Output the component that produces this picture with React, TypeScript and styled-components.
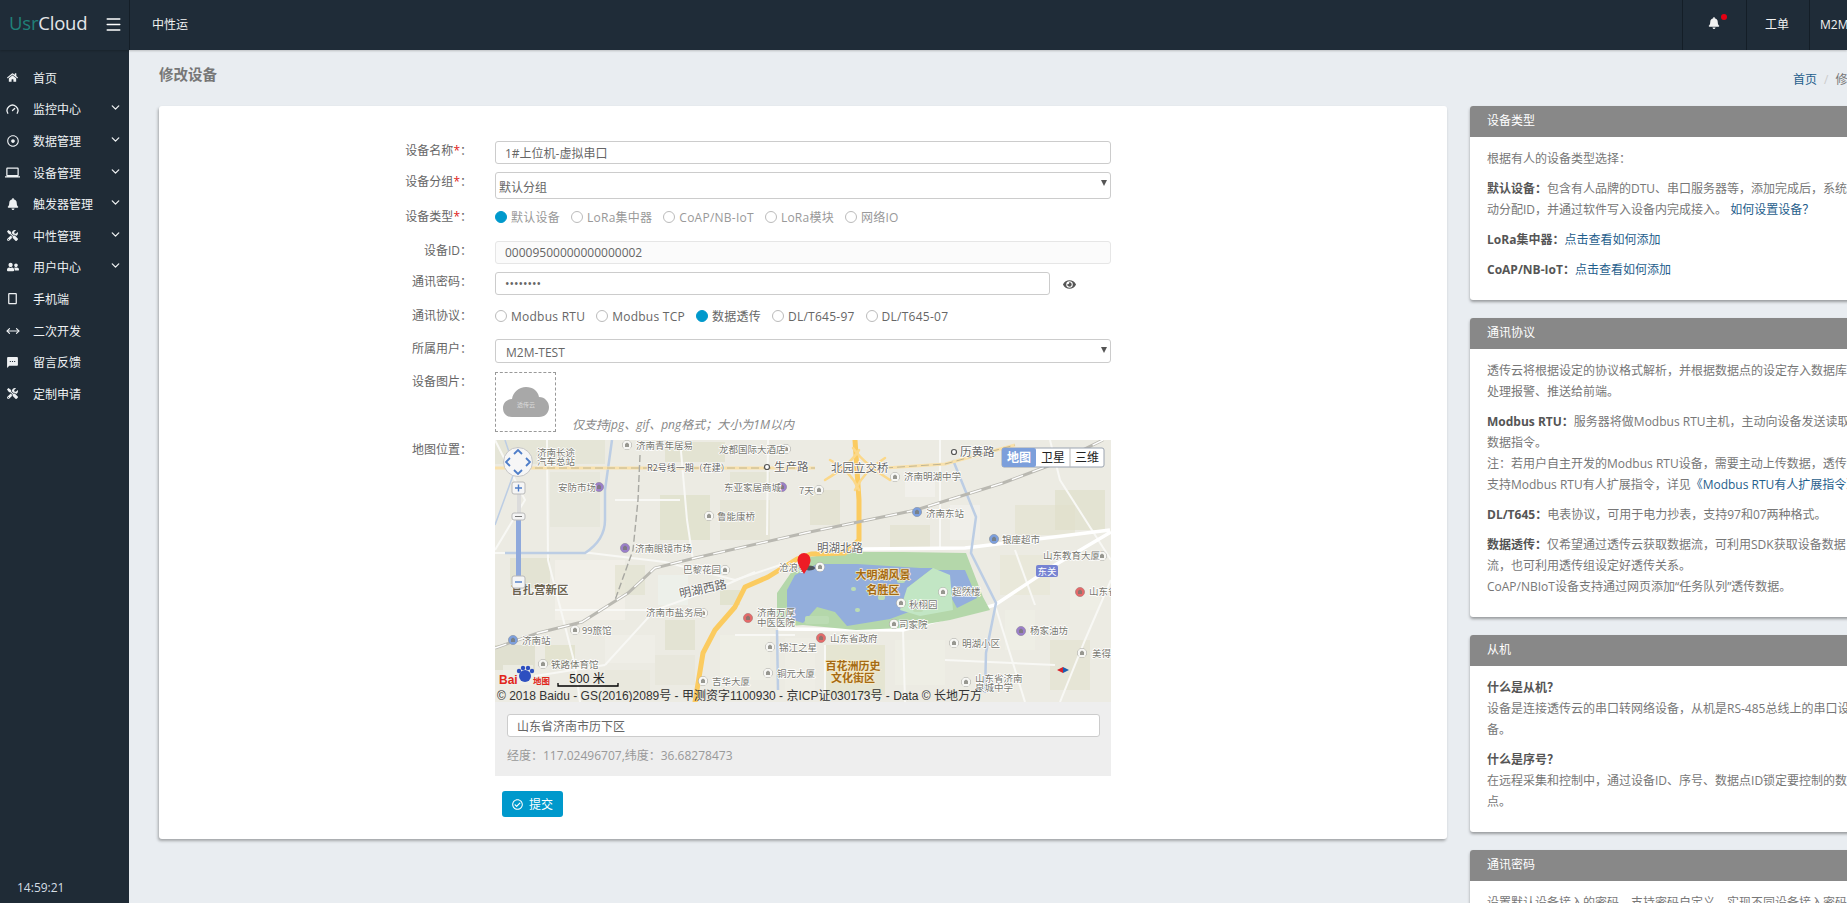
import React from 'react';
import styled, { createGlobalStyle } from 'styled-components';
import { ChevronDown, Gauge, Menu, MoveHorizontal } from 'lucide-react';
import {
  FaBell,
  FaEye,
  FaHome,
  FaRegCheckCircle,
  FaRegDotCircle,
  FaTools,
  FaUserFriends,
} from 'react-icons/fa';
import { MdLaptop, MdOutlineCropPortrait, MdSms } from 'react-icons/md';

const GlobalStyle = createGlobalStyle`
  html, body {
    margin: 0;
    height: 100%;
    overflow: hidden;
    background: #e9edf1;
  }
  body {
    font-family: "Open Sans", "Noto Sans CJK SC", sans-serif;
    font-size: 12px;
    color: #666;
  }
  * { box-sizing: border-box; }
`;

const navItems = [
  { icon: <FaHome size={11} />, text: '首页' },
  { icon: <Gauge size={13} strokeWidth={2.4} />, text: '监控中心', more: true },
  { icon: <FaRegDotCircle />, text: '数据管理', more: true },
  { icon: <MdLaptop size={15} />, text: '设备管理', more: true },
  { icon: <FaBell />, text: '触发器管理', more: true },
  { icon: <FaTools size={11} />, text: '中性管理', more: true },
  { icon: <FaUserFriends />, text: '用户中心', more: true },
  { icon: <MdOutlineCropPortrait size={15} />, text: '手机端' },
  { icon: <MoveHorizontal size={14} strokeWidth={2} />, text: '二次开发' },
  { icon: <MdSms size={13} />, text: '留言反馈' },
  { icon: <FaTools size={11} />, text: '定制申请' },
];

const typeOptions = ['默认设备', 'LoRa集中器', 'CoAP/NB-IoT', 'LoRa模块', '网络IO'];
const protocolOptions = ['Modbus RTU', 'Modbus TCP', '数据透传', 'DL/T645-97', 'DL/T645-07'];

// map blocks: x, y, w, h, colour
const blocks: [number, number, number, number, string][] = [
  [0, 0, 110, 24, '#e3e2d2'], [55, 32, 50, 55, '#e6e5d8'], [170, 2, 60, 20, '#dfdfca'], [165, 55, 50, 45, '#dedfc8'],
  [235, 32, 40, 20, '#e2e2d0'], [225, 60, 50, 40, '#e4e3d2'], [15, 118, 40, 30, '#e0e0cc'], [60, 120, 70, 60, '#f3f1ea'],
  [120, 125, 30, 30, '#e3e2d0'], [163, 135, 30, 30, '#eef2ec'], [225, 150, 20, 15, '#dedfc8'], [170, 180, 30, 30, '#e0dfcc'],
  [110, 195, 50, 28, '#f1efe8'], [50, 205, 30, 20, '#e0dfc8'], [160, 215, 40, 30, '#e7e6d8'], [0, 205, 40, 25, '#dcdcc8'],
  [225, 195, 50, 45, '#f0efe6'], [290, 198, 30, 60, '#efeee6'], [330, 205, 60, 50, '#e3e2ca'], [400, 200, 50, 45, '#f0efe6'],
  [505, 115, 50, 40, '#e8e7d6'], [520, 65, 60, 30, '#e4e3d0'], [395, 85, 40, 22, '#e2e1ce'], [455, 65, 30, 35, '#f2f1ec'],
  [560, 50, 50, 40, '#dfdfca'], [510, 170, 30, 40, '#f0efe6'], [555, 200, 40, 50, '#e4e3d0'], [575, 140, 30, 30, '#f0efe6'],
  [410, 35, 30, 22, '#f3f2ee'], [315, 50, 30, 35, '#e1e0cc'], [110, 230, 45, 25, '#e8e7da'], [8, 225, 30, 20, '#f0efe8'],
];

// white roads
const roads = [
  'M0 113 L95 113 L170 122 L240 140 L300 120',
  'M110 225 L160 170 L235 143 L260 132',
  'M52 0 L53 120 L80 225 L85 262',
  'M185 0 L192 80 L198 120',
  'M273 0 L272 95',
  'M408 190 L410 262',
  'M445 0 L445 108',
  'M555 0 L565 40 L616 120',
  'M616 140 L590 200 L565 262',
  'M0 0 L30 60 L0 110',
  'M110 225 L40 236',
  'M500 165 L530 262',
  'M60 170 L160 170',
  'M240 195 L300 195',
  'M330 205 L330 262',
  'M450 220 L560 225',
  'M520 110 L540 165',
  'M120 60 L185 60',
];

// points of interest: label x, y, text, icon x, y, icon colour
const pois: [number, number, string, number, number, string][] = [
  [141, 5, '济南青年居易', 132, 5, '#f7f7f4'], [224, 9, '龙都国际大酒店', 291, 9, '#f7f7f4'],
  [63, 47, '安防市场', 104, 47, '#9a7fc8'], [229, 47, '东亚家居商城', 287, 47, '#9a7fc8'],
  [222, 76, '鲁能康桥', 214, 76, '#f7f7f4'], [140, 108, '济南眼镜市场', 130, 108, '#9a7fc8'],
  [188, 129, '巴黎花园', 230, 130, '#f7f7f4'], [151, 172, '济南市盐务局', 208, 173, '#f7f7f4'],
  [284, 207, '锦江之星', 275, 207, '#f7f7f4'], [282, 233, '铜元大厦', 273, 233, '#f7f7f4'],
  [217, 241, '吉华大厦', 208, 241, '#f7f7f4'], [56, 224, '铁路体育馆', 48, 224, '#f7f7f4'],
  [87, 190, '99旅馆', 80, 190, '#f7f7f4'], [27, 200, '济南站', 18, 200, '#7d9fdc'],
  [409, 36, '济南明湖中学', 400, 37, '#f7f7f4'], [431, 73, '济南东站', 422, 72, '#7d9fdc'],
  [507, 99, '银座超市', 499, 99, '#7d9fdc'], [548, 115, '山东教育大厦', 607, 116, '#f7f7f4'],
  [594, 151, '山东省', 585, 152, '#e36a6a'], [457, 151, '超然楼', 448, 152, '#f7f7f4'],
  [414, 164, '秋栩园', 406, 163, '#f7f7f4'], [404, 184, '司家院', 399, 184, '#f7f7f4'],
  [335, 198, '山东省政府', 326, 198, '#e36a6a'], [535, 190, '杨家油坊', 526, 191, '#9a7fc8'],
  [467, 203, '明湖小区', 459, 203, '#f7f7f4'], [597, 213, '美得乐', 587, 213, '#f7f7f4'],
  [480, 238, '山东省济南', 471, 242, '#f7f7f4'], [304, 50, '7天', 324, 50, '#f7f7f4'],
  [262, 172, '济南万厚', 253, 178, '#e36a6a'], [284, 127, '沧浪亭', 325, 127, '#f7f7f4'],
];

const plainLabels: [number, number, string][] = [
  [42, 12, '济南长途'], [42, 21, '汽车总站'], [262, 182, '中医医院'], [480, 247, '泉城中学'],
];

const bigLabels: [number, number, string][] = [
  [279, 27, '生产路'], [465, 12, '历黄路'], [336, 28, '北园立交桥'], [322, 108, '明湖北路'],
];

const brownLabels: [number, number, string][] = [
  [388, 134, '大明湖风景'], [388, 149, '名胜区'], [358, 225, '百花洲历史'], [358, 237, '文化街区'],
];

const lakePatches: [number, number, number, number][] = [
  [356, 147, 5, 4], [383, 155, 7, 5], [402, 137, 8, 6], [360, 168, 5, 4], [310, 176, 24, 8], [418, 166, 10, 6],
];

const MapDrawing = () => (
  <MapSvg viewBox="0 0 616 262" width="616" height="262">
    <rect width="616" height="262" fill="#ecebe3" />
    {blocks.map(([x, y, w, h, c]) => (
      <rect key={`${x}-${y}`} x={x} y={y} width={w} height={h} fill={c} fillOpacity="0.7" />
    ))}
    <g fill="none" stroke="#f8f8f5" strokeWidth="2">
      {roads.map((d) => (
        <path key={d} d={d} />
      ))}
    </g>
    <path d="M368 109 L470 108 L615 90 M283 189 L408 190 L500 165 L560 125 L616 92" fill="none" stroke="#fff" strokeWidth="3.5" />

    {/* rivers */}
    <g fill="none" stroke="#bccde4" strokeWidth="2.5">
      <path d="M10 113 L90 113 Q110 100 110 80 L110 50 L117 0" />
      <path d="M458 20 L481 77 L476 113 L501 163 L491 213 L490 253" />
      <path d="M282 190 L283 250" />
      <path d="M0 85 L20 30 L10 0" strokeWidth="1.5" />
    </g>

    {/* lake and park */}
    <path d="M300 127 L282 153 L282 187 L308 185 L361 190 L408 188 L455 180 L495 170 L488 157 L471 113 L408 112 L365 112 L341 113 L315 117 Z" fill="#b4d7aa" />
    <path d="M300 135 L292 150 L292 178 L308 183 L322 167 L340 172 L352 186 L395 179 L430 166 L412 148 L438 128 L425 128 L362 124 L322 124 Z" fill="#93aedc" />
    <path d="M438 130 L470 130 L482 158 L462 168 L452 150 Z" fill="#93aedc" />
    <path d="M412 148 L438 128 L455 135 L458 170 L425 176 L405 170 Z" fill="#c2e6c4" />
    {lakePatches.map(([x, y, w, h]) => (
      <rect key={`${x}-${y}`} x={x} y={y} width={w} height={h} rx="2" fill="#bcdcb4" />
    ))}

    {/* yellow ring road */}
    <g fill="none" strokeLinejoin="round" strokeLinecap="round">
      <path d="M200 262 L208 213 L220 190 L240 167 L250 147 L273 137 L302 119 L316 114 L350 113 L364 100 L364 60 L360 0" stroke="#fbcb60" strokeWidth="5" />
      <path d="M330 40 Q355 25 364 10 M395 40 Q370 25 358 8 M335 20 Q355 30 364 50 M390 18 Q370 30 360 50" stroke="#fbd88a" strokeWidth="2.5" />
      <path d="M0 28 L320 28 M390 28 L450 24 L520 5" stroke="#f9e1ab" strokeWidth="3" strokeLinecap="butt" />
      <path d="M40 28 L320 28 M390 28 L450 24 L520 5" stroke="#b2a98a" strokeWidth="0.8" strokeDasharray="8 4" strokeLinecap="butt" />
    </g>

    {/* railway */}
    <g fill="none">
      <path d="M0 208 L43 193 L87 182 L133 153 L160 128 L200 118 L310 93 L421 70 L508 43 L561 23 L608 0" stroke="#b9b8b1" strokeWidth="3" />
      <path d="M0 208 L43 193 L87 182 L133 153 L160 128 L200 118 L310 93 L421 70 L508 43 L561 23 L608 0" stroke="#fff" strokeWidth="1.4" strokeDasharray="12 10" />
      <path d="M145 15 L143 60 L138 110 L120 160" stroke="#a8a8a2" strokeWidth="1.4" strokeDasharray="7 3" />
    </g>

    {/* places */}
    <g fontFamily="'Noto Sans CJK SC', sans-serif" fontSize="9.5" fill="#77776f" stroke="#ffffff" strokeWidth="1.4" paintOrder="stroke">
      {pois.map(([x, y, text, ix, iy, c]) => (
        <g key={text}>
          <circle cx={ix} cy={iy} r="4.5" fill={c} stroke="#8d8d88" strokeWidth="0.8" />
          <path d={`M${ix - 2} ${iy + 2} v-3 l2 -1.5 l2 1.5 v3 Z`} fill="#77776f" stroke="none" opacity="0.75" />
          <text x={x} y={y + 3.5}>{text}</text>
        </g>
      ))}
      {plainLabels.map(([x, y, text]) => (
        <text key={text} x={x} y={y + 3.5}>{text}</text>
      ))}
      <text x="152" y="31" fill="#666" fontSize="9">R2号线一期（在建）</text>
      {bigLabels.map(([x, y, text]) => (
        <text key={text} x={x} y={y + 4} fontSize="11.5" fill="#666">{text}</text>
      ))}
      <text x="208" y="153" fontSize="12" fill="#666" textAnchor="middle" transform="rotate(-12 208 149)">明湖西路</text>
      <text x="16" y="154" fontSize="11.5" fontWeight="700" fill="#6d6450">官扎营新区</text>
      {brownLabels.map(([x, y, text]) => (
        <text key={text} x={x} y={y + 4.5} fontSize="11" fontWeight="700" textAnchor="middle" fill="#a56a12" stroke="#f7ecc8">{text}</text>
      ))}
    </g>
    <circle cx="272" cy="27" r="2.5" fill="#fff" stroke="#555" strokeWidth="1.2" />
    <circle cx="459" cy="12" r="2.5" fill="#fff" stroke="#555" strokeWidth="1.2" />
    <rect x="541" y="125" width="22" height="12" rx="2" fill="#7683d2" />
    <text x="552" y="134.5" textAnchor="middle" fontSize="9.5" fill="#fff" fontFamily="'Noto Sans CJK SC', sans-serif">东关</text>
    <path d="M562 230 l6 -3 v6 Z" fill="#d8232a" />
    <path d="M574 230 l-6 -3 v6 Z" fill="#1d5fb0" />

    {/* marker */}
    <ellipse cx="314" cy="128" rx="6" ry="2.5" fill="#333" opacity="0.75" />
    <path d="M309 134 C305 128 302.5 124 302.5 120 A6.5 7 0 0 1 315.5 120 C315.5 124 313 128 309 134 Z" fill="#ee1c25" />

    {/* navigation control */}
    <circle cx="23" cy="22" r="14.5" fill="#f6f6f6" stroke="#c6c6c6" />
    <path d="M19 14 l4 -4 l4 4 M19 30 l4 4 l4 -4 M15 18 l-4 4 l4 4 M31 18 l4 4 l-4 4" fill="none" stroke="#4e7dc8" strokeWidth="1.8" />
    <rect x="22" y="53" width="4" height="24" fill="#dcdcdc" />
    <rect x="21" y="78" width="5" height="62" fill="#8fa9dc" />
    <rect x="17" y="42" width="13" height="12" rx="2" fill="#f5f5f5" stroke="#b9b9b9" />
    <path d="M20 48 h7 M23.5 44.5 v7" stroke="#4e7dc8" strokeWidth="1.4" />
    <rect x="17" y="73" width="13" height="7" rx="2" fill="#f5f5f5" stroke="#b9b9b9" />
    <path d="M20 76.5 h7" stroke="#777" />
    <rect x="17" y="136" width="13" height="12" rx="2" fill="#f5f5f5" stroke="#b9b9b9" />
    <path d="M20 142 h7" stroke="#4e7dc8" strokeWidth="1.4" />

    {/* map type switch */}
    <rect x="507" y="8" width="102" height="19" rx="2" fill="#fff" stroke="#9aa3b0" />
    <rect x="507" y="8" width="34" height="19" rx="2" fill="#7c9fdb" />
    <path d="M575 8 v19" stroke="#bbb" />
    <g fontFamily="'Noto Sans CJK SC', sans-serif" fontSize="12" textAnchor="middle">
      <text x="524" y="22" fill="#fff" fontWeight="700">地图</text>
      <text x="558" y="22" fill="#222">卫星</text>
      <text x="592" y="22" fill="#222">三维</text>
    </g>

    {/* baidu mark, scale and copyright */}
    <g fill="#2d4fc0">
      <circle cx="30" cy="236" r="6" />
      <circle cx="24" cy="231" r="2.2" />
      <circle cx="28" cy="228" r="2.2" />
      <circle cx="33" cy="228" r="2.2" />
      <circle cx="37" cy="231" r="2.2" />
    </g>
    <text x="4" y="244" fontFamily="'Liberation Sans', sans-serif" fontWeight="700" fontSize="12" fill="#e1251b">Bai</text>
    <text x="38" y="244" fontFamily="'Noto Sans CJK SC', sans-serif" fontWeight="700" fontSize="8.5" fill="#e1251b">地图</text>
    <text x="92" y="243" textAnchor="middle" fontFamily="'Liberation Sans', 'Noto Sans CJK SC', sans-serif" fontSize="12" fill="#222">500 米</text>
    <path d="M63 243 v3 h60 v-3" fill="none" stroke="#000" strokeWidth="1.3" />
    <text x="2" y="260" fontFamily="'Liberation Sans', 'Noto Sans CJK SC', sans-serif" fontSize="12" fill="#333">© 2018 Baidu - GS(2016)2089号 - 甲测资字1100930 - 京ICP证030173号 - Data © 长地万方</text>
  </MapSvg>
);

const App = () => (
  <Page>
    <GlobalStyle />
    <TopBar>
      <Brand>
        <Logo>
          <em>Usr</em>Cloud
        </Logo>
        <Menu size={19} strokeWidth={1.7} color="#ffffff" />
      </Brand>
      <TopTitle>中性运</TopTitle>
      <TopCell $width={64}>
        <BellIcon>
          <FaBell size={12} />
          <RedDot />
        </BellIcon>
      </TopCell>
      <TopCell $width={63}>工单</TopCell>
      <TopCell $width={38}>M2M-TEST</TopCell>
    </TopBar>
    <Body>
      <Sidebar>
        <Nav>
          {navItems.map((item) => (
            <NavItem key={item.text}>
              <NavIcon>{item.icon}</NavIcon>
              <span>{item.text}</span>
              {item.more && (
                <NavArrow>
                  <ChevronDown size={13} strokeWidth={2.4} />
                </NavArrow>
              )}
            </NavItem>
          ))}
        </Nav>
        <Clock>14:59:21</Clock>
      </Sidebar>
      <Main>
        <TitleRow>
          <PageTitle>修改设备</PageTitle>
          <Breadcrumb>
            <a>首页</a>
            <i>/</i>
            <span>修改设备</span>
          </Breadcrumb>
        </TitleRow>
        <Columns>
          <FormCard>
            <Row>
              <Label>设备名称<b>*</b>：</Label>
              <TextInput readOnly value="1#上位机-虚拟串口" />
            </Row>
            <Row>
              <Label>设备分组<b>*</b>：</Label>
              <SelectBox $height={27} $pad={3}>
                默认分组
                <Caret />
              </SelectBox>
            </Row>
            <Row $bottom={14}>
              <Label>设备类型<b>*</b>：</Label>
              <Radios>
                {typeOptions.map((opt, i) => (
                  <RadioItem key={opt} $muted>
                    <RadioDot $checked={i === 0} />
                    {opt}
                  </RadioItem>
                ))}
              </Radios>
            </Row>
            <Row>
              <Label>设备ID：</Label>
              <TextInput readOnly disabled value="00009500000000000002" />
            </Row>
            <Row>
              <Label>通讯密码：</Label>
              <PasswordInput readOnly type="password" value="12345678" />
              <EyeIcon>
                <FaEye size={13} />
              </EyeIcon>
            </Row>
            <Row $bottom={13}>
              <Label $top={3}>通讯协议：</Label>
              <Radios $top={3}>
                {protocolOptions.map((opt, i) => (
                  <RadioItem key={opt}>
                    <RadioDot $checked={i === 2} />
                    {opt}
                  </RadioItem>
                ))}
              </Radios>
            </Row>
            <Row $bottom={9}>
              <Label>所属用户：</Label>
              <SelectBox $height={24} $pad={10}>
                M2M-TEST
                <Caret />
              </SelectBox>
            </Row>
            <Row>
              <Label>设备图片：</Label>
              <UploadBox>
                <svg width="46" height="32" viewBox="0 0 46 32">
                  <path d="M9 31 C3 31 0 27 0 22 C0 17 4 13 9 13 C10 6 16 1 23 1 C30 1 35 5 36 11 C42 11 46 16 46 21 C46 27 42 31 36 31 Z" fill="#a8a8a8" />
                  <text x="23" y="21" textAnchor="middle" fontSize="6" fill="#dcdcdc" fontFamily="'Noto Sans CJK SC', sans-serif">透传云</text>
                </svg>
              </UploadBox>
              <UploadHint>仅支持jpg、gif、png格式；大小为1M以内</UploadHint>
            </Row>
            <Row $bottom={15}>
              <Label>地图位置：</Label>
              <MapPanel>
                <MapDrawing />
                <MapFooter>
                  <AddressInput readOnly value="山东省济南市历下区" />
                  <Coords>经度：117.02496707,纬度：36.68278473</Coords>
                </MapFooter>
              </MapPanel>
            </Row>
            <SubmitRow>
              <SubmitButton>
                <FaRegCheckCircle size={11} />
                提交
              </SubmitButton>
            </SubmitRow>
          </FormCard>
          <Aside>
            <Panel>
              <PanelHead>设备类型</PanelHead>
              <PanelBody>
                <p>根据有人的设备类型选择：</p>
                <p>
                  <strong>默认设备：</strong>包含有人品牌的DTU、串口服务器等，添加完成后，系统将自<br />
                  动分配ID，并通过软件写入设备内完成接入。 <a>如何设置设备？</a>
                </p>
                <p>
                  <strong>LoRa集中器：</strong><a>点击查看如何添加</a>
                </p>
                <p>
                  <strong>CoAP/NB-IoT：</strong><a>点击查看如何添加</a>
                </p>
              </PanelBody>
            </Panel>
            <Panel>
              <PanelHead>通讯协议</PanelHead>
              <PanelBody>
                <p>
                  透传云将根据设定的协议格式解析，并根据数据点的设定存入数据库、<br />
                  处理报警、推送给前端。
                </p>
                <p>
                  <strong>Modbus RTU：</strong>服务器将做Modbus RTU主机，主动向设备发送读取<br />
                  数据指令。<br />
                  注：若用户自主开发的Modbus RTU设备，需要主动上传数据，透传云<br />
                  支持Modbus RTU有人扩展指令，详见<a>《Modbus RTU有人扩展指令》</a>
                </p>
                <p>
                  <strong>DL/T645：</strong>电表协议，可用于电力抄表，支持97和07两种格式。
                </p>
                <p>
                  <strong>数据透传：</strong>仅希望通过透传云获取数据流，可利用SDK获取设备数据<br />
                  流，也可利用透传组设定好透传关系。<br />
                  CoAP/NBIoT设备支持通过网页添加“任务队列”透传数据。
                </p>
              </PanelBody>
            </Panel>
            <Panel>
              <PanelHead>从机</PanelHead>
              <PanelBody>
                <p>
                  <strong>什么是从机？</strong><br />
                  设备是连接透传云的串口转网络设备，从机是RS-485总线上的串口设<br />
                  备。
                </p>
                <p>
                  <strong>什么是序号？</strong><br />
                  在远程采集和控制中，通过设备ID、序号、数据点ID锁定要控制的数据<br />
                  点。
                </p>
              </PanelBody>
            </Panel>
            <Panel>
              <PanelHead>通讯密码</PanelHead>
              <PanelBody>
                <p>设置默认设备接入的密码，支持密码自定义，实现不同设备接入密码不同。</p>
              </PanelBody>
            </Panel>
          </Aside>
        </Columns>
      </Main>
    </Body>
  </Page>
);

export default App;

const Page = styled.div`
  display: flex;
  flex-direction: column;
  width: 100%;
  height: 100vh;
  overflow: hidden;
`;

const TopBar = styled.header`
  display: flex;
  align-items: stretch;
  flex: none;
  height: 50px;
  background-color: #1f2c38;
  color: #f2f2f2;
  box-shadow: 0 1px 2px rgba(0, 0, 0, 0.2);
  position: relative;
  z-index: 2;
`;

const Brand = styled.div`
  display: flex;
  align-items: center;
  justify-content: space-between;
  flex: none;
  width: 130px;
  padding: 0 6px 2px 9px;
  border-right: 1px solid #141e27;
`;

const Logo = styled.div`
  font-family: 'Open Sans', sans-serif;
  font-size: 18.5px;
  margin-top: -4px;
  color: #e4e6e8;
  letter-spacing: -0.2px;
  & > em {
    font-style: normal;
    color: #1f8079;
  }
`;

const TopTitle = styled.div`
  display: flex;
  align-items: center;
  flex: 1;
  padding: 0 0 2px 22px;
`;

const TopCell = styled.div<{ $width: number }>`
  display: flex;
  align-items: center;
  flex: none;
  width: ${(p) => p.$width}px;
  padding: 0 0 2px 18px;
  border-left: 1px solid #141e27;
  white-space: nowrap;
  overflow: hidden;
  &:last-child {
    padding-left: 10px;
  }
`;

const BellIcon = styled.span`
  position: relative;
  display: flex;
  margin-left: 7px;
  margin-top: -3px;
`;

const RedDot = styled.span`
  position: absolute;
  top: -3px;
  right: -7px;
  width: 6px;
  height: 6px;
  border-radius: 50%;
  background: #e60012;
`;

const Body = styled.div`
  display: flex;
  flex: 1;
  min-height: 0;
`;

const Sidebar = styled.aside`
  display: flex;
  flex-direction: column;
  flex: none;
  width: 129px;
  background-color: #1f2b36;
  color: #eef1f3;
`;

const Nav = styled.nav`
  padding-top: 12px;
`;

const NavItem = styled.div`
  display: flex;
  align-items: center;
  height: 31.6px;
`;

const NavIcon = styled.span`
  display: flex;
  justify-content: center;
  align-items: center;
  flex: none;
  width: 25px;
  margin-right: 8px;
  font-size: 12px;
`;

const NavArrow = styled.span`
  display: flex;
  margin-left: auto;
  margin-right: 7px;
  margin-top: -3px;
`;

const Clock = styled.div`
  margin-top: auto;
  padding: 0 0 7px 17px;
  color: #d5dee4;
`;

const Main = styled.main`
  flex: 1;
  min-width: 0;
  padding-left: 30px;
  overflow: hidden;
`;

const TitleRow = styled.div`
  display: grid;
  grid-template-columns: 1634px auto;
  height: 56px;
`;

const PageTitle = styled.h1`
  margin: 15px 0 0;
  font-size: 14.5px;
  line-height: 20px;
  font-weight: 700;
  color: #777;
`;

const Breadcrumb = styled.div`
  display: flex;
  gap: 7px;
  margin-top: 21px;
  line-height: 18px;
  white-space: nowrap;
  color: #777;
  & > a {
    color: #1f5e8c;
  }
  & > i {
    color: #ccc;
    font-style: normal;
  }
`;

const Columns = styled.div`
  display: flex;
  align-items: flex-start;
  gap: 23px;
  width: 1900px;
`;

const FormCard = styled.section`
  flex: none;
  width: 1288px;
  height: 733px;
  padding-top: 35px;
  background: #fff;
  border-radius: 3px;
  box-shadow: -1px 2px 3px rgba(0, 0, 0, 0.3);
`;

const Row = styled.div<{ $bottom?: number }>`
  display: flex;
  align-items: flex-start;
  margin-bottom: ${(p) => p.$bottom ?? 8}px;
`;

const Label = styled.label<{ $top?: number }>`
  flex: none;
  width: 313px;
  margin-right: 23px;
  padding-top: ${(p) => p.$top ?? 0}px;
  line-height: 20px;
  text-align: right;
  color: #666;
  white-space: nowrap;
  & > b {
    color: #e02020;
    font-weight: 400;
  }
`;

const inputStyle = `
  height: 23px;
  padding: 0 9px;
  border: 1px solid #ccc;
  border-radius: 3px;
  font-family: inherit;
  font-size: 12px;
  color: #666;
  background: #fff;
  outline: none;
`;

const TextInput = styled.input`
  ${inputStyle}
  width: 616px;
  &:disabled {
    background: #fbfbfb;
    border-color: #e6e6e6;
  }
`;

const PasswordInput = styled.input`
  ${inputStyle}
  width: 555px;
`;

const EyeIcon = styled.span`
  display: flex;
  margin: 6px 0 0 13px;
  color: #555;
`;

const SelectBox = styled.div<{ $height: number; $pad: number }>`
  position: relative;
  display: flex;
  align-items: center;
  width: 616px;
  height: ${(p) => p.$height}px;
  padding: 3px 0 0 ${(p) => p.$pad}px;
  border: 1px solid #ccc;
  border-radius: 3px;
  background: #fff;
`;

const Caret = styled.span`
  position: absolute;
  top: 7px;
  right: 3px;
  width: 0;
  height: 0;
  border-left: 3.5px solid transparent;
  border-right: 3.5px solid transparent;
  border-top: 6px solid #555;
`;

const Radios = styled.div<{ $top?: number }>`
  display: flex;
  gap: 11px;
  padding-top: ${(p) => p.$top ?? 0}px;
`;

const RadioItem = styled.span<{ $muted?: boolean }>`
  display: flex;
  align-items: center;
  gap: 4px;
  height: 20px;
  letter-spacing: 0.25px;
  color: ${(p) => (p.$muted ? '#999' : '#666')};
  white-space: nowrap;
`;

const RadioDot = styled.span<{ $checked?: boolean }>`
  flex: none;
  width: 12px;
  height: 12px;
  border-radius: 50%;
  border: 1px solid ${(p) => (p.$checked ? '#0099cc' : '#bbb')};
  background: ${(p) => (p.$checked ? '#0099cc' : '#fff')};
`;

const UploadBox = styled.div`
  display: flex;
  align-items: center;
  justify-content: center;
  flex: none;
  width: 61px;
  height: 60px;
  border: 1px dashed #999;
`;

const UploadHint = styled.em`
  align-self: flex-end;
  margin: 0 0 -2px 16px;
  color: #888;
  line-height: 18px;
`;

const MapPanel = styled.div`
  width: 616px;
  background: #eee;
`;

const MapSvg = styled.svg`
  display: block;
`;

const MapFooter = styled.div`
  padding: 12px 11px 0 12px;
  height: 74px;
`;

const AddressInput = styled.input`
  ${inputStyle}
  display: block;
  width: 100%;
`;

const Coords = styled.div`
  margin-top: 10px;
  color: #999;
  line-height: 18px;
`;

const SubmitRow = styled.div`
  padding-left: 343px;
`;

const SubmitButton = styled.button`
  display: flex;
  align-items: center;
  justify-content: center;
  gap: 6px;
  width: 61px;
  height: 26px;
  padding: 0;
  border: none;
  border-radius: 3px;
  background-color: #0099cc;
  color: #fff;
  font-family: inherit;
  font-size: 12px;
`;

const Aside = styled.div`
  flex: none;
  width: 500px;
`;

const Panel = styled.section`
  margin-bottom: 18px;
  background: #fff;
  border-radius: 3px;
  box-shadow: 0 2px 3px rgba(0, 0, 0, 0.35);
  overflow: hidden;
`;

const PanelHead = styled.div`
  height: 31px;
  padding-left: 17px;
  line-height: 30px;
  background-color: #888;
  color: #fff;
`;

const PanelBody = styled.div`
  padding: 11px 17px 11px;
  line-height: 21px;
  color: #777;
  white-space: nowrap;
  & > p {
    margin: 0 0 9px;
  }
  & strong {
    color: #555;
    font-weight: 700;
  }
  & a {
    color: #1f5e8c;
  }
`;
